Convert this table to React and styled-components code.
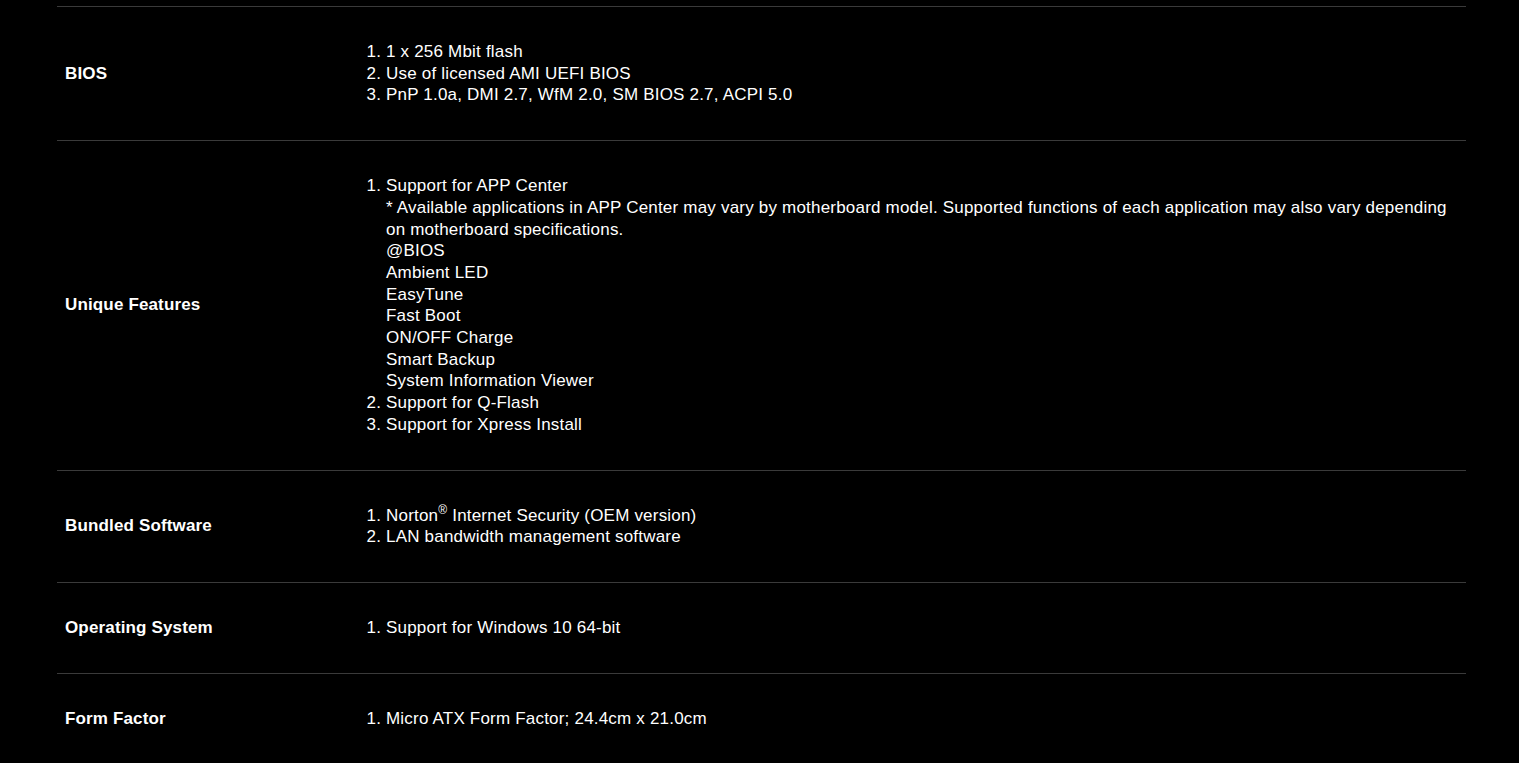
import styled, { createGlobalStyle } from "styled-components"

const GlobalStyle = createGlobalStyle`
    body {
        margin: 0;
        background-color: #000;
        font-family: "Liberation Sans", Arial, sans-serif;
    }
`

const specs = [
    {
        label: "BIOS",
        items: [
            { text: "1 x 256 Mbit flash" },
            { text: "Use of licensed AMI UEFI BIOS" },
            { text: "PnP 1.0a, DMI 2.7, WfM 2.0, SM BIOS 2.7, ACPI 5.0" },
        ],
    },
    {
        label: "Unique Features",
        items: [
            {
                text: "Support for APP Center",
                notes: [
                    "* Available applications in APP Center may vary by motherboard model. Supported functions of each application may also vary depending on motherboard specifications.",
                    "@BIOS",
                    "Ambient LED",
                    "EasyTune",
                    "Fast Boot",
                    "ON/OFF Charge",
                    "Smart Backup",
                    "System Information Viewer",
                ],
            },
            { text: "Support for Q-Flash" },
            { text: "Support for Xpress Install" },
        ],
    },
    {
        label: "Bundled Software",
        items: [
            { text: <>Norton<sup>®</sup> Internet Security (OEM version)</> },
            { text: "LAN bandwidth management software" },
        ],
    },
    {
        label: "Operating System",
        items: [{ text: "Support for Windows 10 64-bit" }],
    },
    {
        label: "Form Factor",
        items: [{ text: "Micro ATX Form Factor; 24.4cm x 21.0cm" }],
    },
]

export default function App() {
    return (
        <Page>
            <GlobalStyle />
            <SpecTable>
                {specs.map((spec) => (
                    <Row key={spec.label}>
                        <Label>{spec.label}</Label>
                        <Value>
                            <List>
                                {spec.items.map((item, i) => (
                                    <li key={i}>
                                        {item.text}
                                        {item.notes && item.notes.map((note) => (
                                            <Note key={note}>{note}</Note>
                                        ))}
                                    </li>
                                ))}
                            </List>
                        </Value>
                    </Row>
                ))}
            </SpecTable>
        </Page>
    )
}

const Page = styled.div`
    background-color: #000;
    min-height: 100vh;
    padding: 6px 53px 0 57px;
    box-sizing: border-box;
`
const SpecTable = styled.div`
    width: 1409px;
    border-top: 1px solid #3a3a3a;
`
const Row = styled.div`
    display: grid;
    grid-template-columns: 303px 1fr;
    border-bottom: 1px solid #3a3a3a;
`
const Label = styled.div`
    display: flex;
    align-items: center;
    padding: 0 8px;
    color: #fff;
    font-size: 17px;
    letter-spacing: 0.15px;
    font-weight: 700;
`
const Value = styled.div`
    padding: 34px 8px 34px 8px;
    color: #fff;
    font-size: 17px;
    letter-spacing: 0.2px;
    line-height: 21.7px;
`
const List = styled.ol`
    margin: 0;
    padding-left: 18px;
    sup {
        font-size: 12px;
        line-height: 0;
    }
`
const Note = styled.div``
